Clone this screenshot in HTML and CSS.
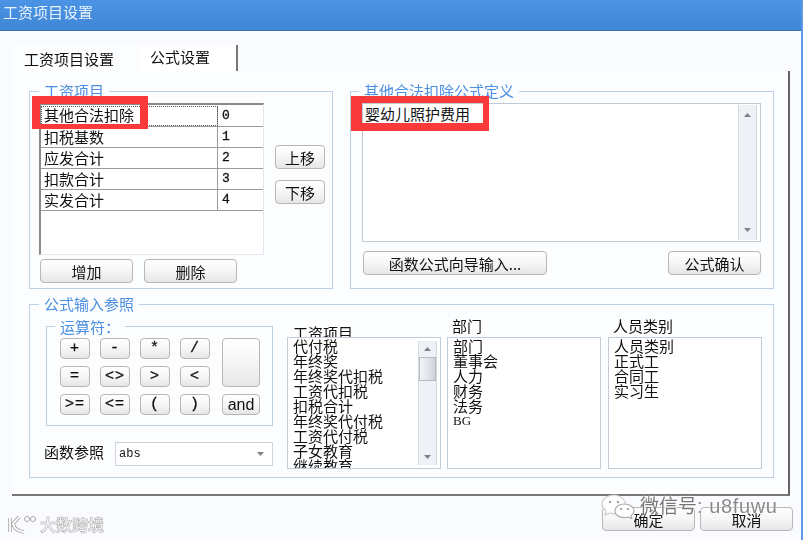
FILE: index.html
```html
<!DOCTYPE html>
<html lang="zh">
<head>
<meta charset="utf-8">
<title>工资项目设置</title>
<link rel="stylesheet" href="styles.css">
</head>
<body>
<div class="window">
  <header class="titlebar">工资项目设置</header>
  <nav class="tabs">
    <span class="tab">工资项目设置</span>
    <span class="tab tab-active">公式设置</span>
  </nav>
  <main class="panel">
    <div class="top-row">
      <section class="group group-items">
        <h2 class="legend legend-items">工资项目</h2>
        <div class="items-grid">
          <div class="table">
            <div class="row"><span class="cell-name cell-focus">其他合法扣除</span><span class="cell-num">0</span></div>
            <div class="row"><span class="cell-name">扣税基数</span><span class="cell-num">1</span></div>
            <div class="row"><span class="cell-name">应发合计</span><span class="cell-num">2</span></div>
            <div class="row"><span class="cell-name">扣款合计</span><span class="cell-num">3</span></div>
            <div class="row"><span class="cell-name">实发合计</span><span class="cell-num">4</span></div>
          </div>
          <div class="move-col">
            <button class="btn btn-move">上移</button>
            <button class="btn btn-move">下移</button>
          </div>
          <div class="items-actions">
            <button class="btn btn-wide">增加</button>
            <button class="btn btn-wide">删除</button>
          </div>
        </div>
        <div class="mark mark-item"></div>
      </section>
      <section class="group group-formula">
        <h2 class="legend legend-formula">其他合法扣除公式定义</h2>
        <div class="formula-box">
          <div class="formula-text">婴幼儿照护费用</div>
          <div class="scrollbar scrollbar-formula">
            <svg class="arrow" viewBox="0 0 9 5"><path d="M4.500 0L9 5H0z"/></svg>
            <svg class="arrow" viewBox="0 0 9 5"><path d="M0 0H9L4.500 5z"/></svg>
          </div>
        </div>
        <div class="formula-actions">
          <button class="btn btn-wizard">函数公式向导输入...</button>
          <button class="btn btn-wide">公式确认</button>
        </div>
        <div class="mark mark-formula"></div>
      </section>
    </div>
    <section class="group group-ref">
      <h2 class="legend legend-ref">公式输入参照</h2>
      <div class="ref-row">
        <div class="ref-left">
          <div class="group group-ops">
            <h3 class="legend legend-ops">运算符：</h3>
            <div class="ops-grid">
              <button class="btn op">+</button>
              <button class="btn op">-</button>
              <button class="btn op">*</button>
              <button class="btn op">/</button>
              <button class="btn op-big"></button>
              <button class="btn op">=</button>
              <button class="btn op">&lt;&gt;</button>
              <button class="btn op">&gt;</button>
              <button class="btn op">&lt;</button>
              <button class="btn op">&gt;=</button>
              <button class="btn op">&lt;=</button>
              <button class="btn op">(</button>
              <button class="btn op">)</button>
              <button class="btn op op-and">and</button>
            </div>
          </div>
          <div class="func-row">
            <span class="func-label">函数参照</span>
            <div class="combo"><span>abs</span><svg class="arrow" viewBox="0 0 9 5"><path d="M0 0H9L4.500 5z"/></svg></div>
          </div>
        </div>
        <div class="list-col list-col-items">
          <div class="list-label list-label-items">工资项目</div>
          <div class="list">
            <div class="list-clip">
              <div>代付税</div><div>年终奖</div><div>年终奖代扣税</div><div>工资代扣税</div><div>扣税合计</div><div>年终奖代付税</div><div>工资代付税</div><div>子女教育</div><div>继续教育</div>
            </div>
            <div class="scrollbar scrollbar-list">
              <svg class="arrow" viewBox="0 0 9 5"><path d="M4.500 0L9 5H0z"/></svg>
              <div class="thumb"></div>
              <svg class="arrow arrow-end" viewBox="0 0 9 5"><path d="M0 0H9L4.500 5z"/></svg>
            </div>
          </div>
        </div>
        <div class="list-col">
          <div class="list-label">部门</div>
          <div class="list">
            <div class="list-clip">
              <div>部门</div><div>董事会</div><div>人力</div><div>财务</div><div>法务</div><div class="latin">BG</div>
            </div>
          </div>
        </div>
        <div class="list-col">
          <div class="list-label">人员类别</div>
          <div class="list">
            <div class="list-clip">
              <div>人员类别</div><div>正式工</div><div>合同工</div><div>实习生</div>
            </div>
          </div>
        </div>
      </div>
    </section>
  </main>
  <footer class="footer">
    <button class="btn btn-foot">确定</button>
    <button class="btn btn-foot">取消</button>
  </footer>
</div>
<div class="wm-left">
  <svg class="wm-logo" viewBox="0 0 30 20"><path d="M3 4V18M12 3L6 10Q8 17 17 18" fill="none" stroke="#a8a8a8" stroke-width="3.500"/><path d="M3 4V18M12 3L6 10Q8 17 17 18" fill="none" stroke="#fff" stroke-width="1.800"/><circle cx="20" cy="5" r="2.500" fill="#fff" stroke="#a8a8a8"/><circle cx="26" cy="5" r="2.500" fill="#fff" stroke="#a8a8a8"/></svg>
  <span class="wm-left-text">大数跨境</span>
</div>
<div class="wm-right">
  <svg class="wm-wechat" viewBox="0 0 36 26"><path d="M14 2C7 2 2 6 2 11c0 3 2 5 4 7l-1 4 5-2c6 2 12 0 14-3C29 11 22 2 14 2z" fill="#fff" stroke="#ccc" stroke-width="1.200"/><path d="M24 11c6 0 10 3 10 7 0 2-1 3-3 5l1 3-4-2c-6 2-13-1-13-6 0-4 4-7 9-7z" fill="#fff" stroke="#aaa" stroke-width="1.200"/><circle cx="10" cy="9" r="1.300" fill="#aaa"/><circle cx="18" cy="9" r="1.300" fill="#aaa"/><circle cx="21" cy="16" r="1" fill="#888"/><circle cx="28" cy="16" r="1" fill="#888"/></svg>
  <span class="wm-right-text"><span class="wm-cjk">微信号</span>: u8fuwu</span>
</div>
</body>
</html>
```

FILE: styles.css
```css
* { box-sizing: border-box; }
html, body { margin: 0; padding: 0; }
body {
  position: relative;
  width: 803px;
  height: 540px;
  overflow: hidden;
  background: #f9fbff;
  font-family: "Noto Sans CJK SC", "Liberation Sans", sans-serif;
  font-size: 15px;
  color: #111;
}
.window {
  width: 803px;
  height: 540px;
  border-right: 2px solid #5b9be3;
  filter: blur(0.35px);
}
.titlebar {
  height: 31px;
  padding: 2px 0 0 3px;
  background: linear-gradient(#4b93e4, #3f86d6);
  border-bottom: 1px solid #3a72b4;
  color: #e8f2fc;
  font-size: 15px;
  line-height: 20px;
}
.tabs {
  display: flex;
  height: 26px;
  margin: 14px 0 0 12px;
}
.tab {
  width: 128px;
  padding: 4px 0 0 12px;
  line-height: 20px;
  background: #fbfdff;
}
.tab-active {
  width: 98px;
  height: 26px;
  padding: 2px 0 0 10px;
  border-right: 2px solid #777;
  background: #fff;
}
.panel {
  width: 778px;
  height: 425px;
  margin-left: 12px;
  padding: 20px 0 0 17px;
  background: #fbfdff;
  border-right: 2px solid #666;
  border-bottom: 2px solid #777;
}
.top-row {
  display: flex;
  gap: 17px;
}
.group {
  position: relative;
  border: 1px solid #bcd1e8;
}
.group-items {
  width: 304px;
  height: 198px;
  padding: 11px 0 0 9px;
}
.group-formula {
  width: 424px;
  height: 198px;
  padding: 11px 0 0 11px;
}
.group-ref {
  width: 745px;
  height: 174px;
  margin-top: 15px;
  padding: 21px 0 0 16px;
}
.group-ops {
  width: 227px;
  height: 100px;
  padding: 11px 0 0 13px;
}
.legend {
  position: absolute;
  margin: 0;
  padding: 0 5px;
  background: #fbfdff;
  color: #4d8fe0;
  font-size: 15px;
  font-weight: 400;
  line-height: 16px;
}
.legend-items { top: -9px; left: 9px; }
.legend-formula { top: -9px; left: 8px; }
.legend-ref { top: -9px; left: 9px; }
.legend-ops { top: -8px; left: 8px; }
.items-grid {
  display: grid;
  grid-template-columns: 225px 50px;
  column-gap: 11px;
}
.table {
  height: 152px;
  background: #fff;
  border-left: 2px solid #8a8a8a;
  border-top: 2px solid #8a8a8a;
  border-right: 1px solid #e4e8ee;
  border-bottom: 1px solid #e4e8ee;
  padding-top: 1px;
}
.row {
  display: flex;
  height: 21px;
  border-bottom: 1px solid #9a9a9a;
  line-height: 20px;
}
.cell-name {
  width: 177px;
  padding-left: 3px;
  border-right: 1px solid #9a9a9a;
}
.cell-focus {
  line-height: 18px;
  outline: 1px dotted #555;
  outline-offset: -1px;
}
.cell-num {
  padding-left: 4px;
  font-family: "Liberation Mono", monospace;
  font-size: 13px;
  -webkit-text-stroke: 0.3px #111;
}
.move-col {
  display: flex;
  flex-direction: column;
  gap: 11px;
  padding-top: 42px;
}
.items-actions {
  display: flex;
  gap: 11px;
  grid-column: 1 / -1;
  margin: 4px 0 0 1px;
}
.btn {
  padding: 0;
  border: 1px solid #b7b7b7;
  border-radius: 4px;
  background: linear-gradient(#fff, #f6f6f6 50%, #e6e6e6);
  color: #111;
  font-family: inherit;
  font-size: 15px;
  line-height: 1;
}
.btn-move { width: 50px; height: 24px; }
.btn-wide { width: 93px; height: 24px; }
.btn-wizard { width: 184px; height: 24px; }
.btn-foot { width: 93px; height: 24px; }
.formula-box {
  display: flex;
  width: 399px;
  height: 139px;
  background: #fff;
  border: 1px solid #c0cad4;
}
.formula-text {
  flex: 1;
  padding: 0 0 0 2px;
  line-height: 20px;
}
.scrollbar {
  display: flex;
  flex-direction: column;
  justify-content: space-between;
  align-items: center;
  background: #eef1f5;
  border-left: 1px solid #d4dae2;
  border-right: 1px solid #d4dae2;
}
.scrollbar-formula {
  width: 19px;
  margin: 1px 3px 1px 0;
  padding: 8px 0;
}
.arrow {
  width: 7px;
  height: 4px;
  fill: #7d8288;
}
.formula-actions {
  display: flex;
  justify-content: space-between;
  width: 398px;
  margin: 9px 0 0 1px;
}
.ref-row {
  display: flex;
}
.ref-left {
  width: 241px;
}
.ops-grid {
  display: grid;
  grid-template-columns: repeat(4, 30px) 38px;
  grid-template-rows: 21px 21px 21px;
  column-gap: 10px;
  row-gap: 7px;
}
.op {
  font-family: "Liberation Mono", monospace;
  font-size: 15px;
  font-weight: 400;
  letter-spacing: 1px;
  -webkit-text-stroke: 0.3px #111;
}
.op-big {
  grid-column: 5;
  grid-row: 1 / 3;
  margin-left: 2px;
  width: 38px;
  height: 49px;
}
.op-and {
  grid-column: 5;
  grid-row: 3;
  width: 38px;
  margin-left: 2px;
  font-family: "Liberation Sans", sans-serif;
  font-size: 16px;
  letter-spacing: 0;
  -webkit-text-stroke: 0;
}
.func-row {
  display: flex;
  gap: 11px;
  margin: 16px 0 0 -2px;
}
.func-label { line-height: 20px; }
.combo {
  display: flex;
  align-items: center;
  justify-content: space-between;
  width: 158px;
  height: 24px;
  padding: 0 8px 0 3px;
  background: #fff;
  border: 1px solid #cdd4dc;
  font-family: "Liberation Mono", monospace;
  font-size: 12px;
}
.list-col {
  display: flex;
  flex-direction: column;
  width: 161px;
  margin-top: -10px;
}
.list-col-items { width: 160px; }
.list-label {
  height: 21px;
  padding-left: 5px;
  line-height: 20px;
}
.list-label-items {
  height: 16px;
  margin-top: 5px;
  padding-left: 6px;
  overflow: hidden;
  line-height: 24px;
}
.list {
  display: flex;
  width: 154px;
  height: 132px;
  background: #fff;
  border: 1px solid #c2ccd6;
  overflow: hidden;
}
.list-clip {
  flex: 1;
  padding: 0 0 0 5px;
  font-size: 15px;
  line-height: 15px;
  overflow: hidden;
}
.latin {
  font-family: "Liberation Serif", serif;
  font-size: 13px;
}
.scrollbar-list {
  justify-content: flex-start;
  width: 19px;
  margin: 3px 3px 3px 0;
  padding-top: 6px;
}
.thumb {
  width: 17px;
  height: 24px;
  margin-top: 6px;
  background: linear-gradient(90deg, #f4f5f8, #cfd3da);
  border: 1px solid #b6bbc3;
}
.arrow-end { margin-top: auto; margin-bottom: 6px; }
.footer {
  display: flex;
  justify-content: flex-end;
  gap: 5px;
  margin-top: 11px;
  padding-right: 8px;
}
.mark {
  position: absolute;
  border-style: solid;
  border-color: #f83a3a;
  pointer-events: none;
}
.mark-item {
  top: 4px;
  left: 2px;
  width: 116px;
  height: 33px;
  border-width: 8px 8px 5px 8px;
}
.mark-formula {
  top: 4px;
  left: 0;
  width: 138px;
  height: 35px;
  border-width: 7px 6px 8px 11px;
}
.wm-left {
  position: absolute;
  left: 7px;
  top: 514px;
  display: flex;
  align-items: center;
  gap: 3px;
}
.wm-logo { width: 30px; height: 20px; }
.wm-left-text {
  color: #f4f4f4;
  font-size: 16px;
  line-height: 20px;
  font-weight: 700;
  -webkit-text-stroke: 0.5px #aaa;
}
.wm-right {
  position: absolute;
  left: 600px;
  top: 492px;
  display: flex;
  align-items: center;
  gap: 4px;
}
.wm-wechat { width: 36px; height: 26px; }
.wm-right-text {
  color: #8a8a8a;
  font-family: "Liberation Sans", sans-serif;
  font-size: 20px;
  letter-spacing: 0.6px;
  line-height: 26px;
  white-space: nowrap;
  text-shadow: 0 0 2px #fff, 0 0 2px #fff;
}
.wm-cjk {
  color: #777;
  font-family: "Noto Sans CJK SC", sans-serif;
  font-size: 19px;
  letter-spacing: 0;
}
```
